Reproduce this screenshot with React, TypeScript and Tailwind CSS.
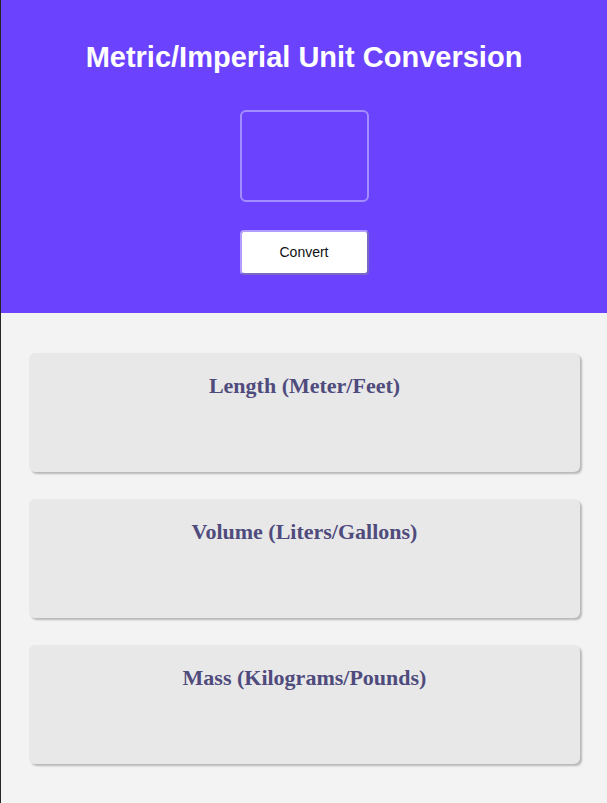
import React from "react";

export default function App() {
  const cards = ["Length (Meter/Feet)", "Volume (Liters/Gallons)", "Mass (Kilograms/Pounds)"];
  return (
    <div className="min-h-[803px] border-l border-[#262626] bg-[#f3f3f3]">
      <header className="flex flex-col items-center bg-[#6b43ff] pt-[40px] pb-[38px]">
        <h1
          className="text-[29px] leading-[34px] font-bold text-white"
          style={{ fontFamily: '"Liberation Sans", Arial, sans-serif' }}
        >
          Metric/Imperial Unit Conversion
        </h1>
        <input
          type="text"
          className="mt-[36px] h-[92px] w-[129px] rounded-[6px] border-2 border-[#a48dff] bg-transparent outline-none"
        />
        <button
          className="mt-[28px] h-[45px] w-[129px] rounded-[4px] border-2 border-[#b19dff] border-r-[#7a69c4] border-b-[#7a69c4] bg-white text-[14px] text-[#111]"
          style={{ fontFamily: '"Liberation Sans", Arial, sans-serif' }}
        >
          Convert
        </button>
      </header>
      <main className="flex flex-col gap-[27px] pl-[28px] pr-[27px] pt-[40px] pb-[39px]">
        {cards.map((c) => (
          <section
            key={c}
            className="h-[119px] rounded-[6px] bg-[#e8e8e8] pt-[21px] text-center shadow-[2px_2px_2px_#b8b8b8]"
          >
            <h2
              className="text-[22px] leading-[24px] font-bold text-[#4f4b7d]"
              style={{ fontFamily: '"Liberation Serif", "Times New Roman", serif' }}
            >
              {c}
            </h2>
          </section>
        ))}
      </main>
    </div>
  );
}
